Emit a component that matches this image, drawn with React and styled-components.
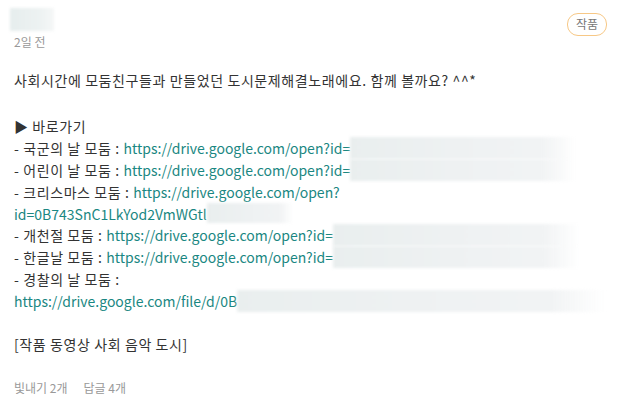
import styled, { createGlobalStyle } from "styled-components"

const Global = createGlobalStyle`
  body {
    margin: 0;
    background: #fff;
    font-family: "Noto Sans CJK KR", "Noto Sans", sans-serif;
  }
`

const Card = styled.div`
  padding: 8px 14px 0 14px;
  color: #333;
`
const Header = styled.div`
  display: flex;
  justify-content: space-between;
  align-items: flex-start;
`
const Author = styled.div`
  display: flex;
  flex-direction: column;
`
const Blur = styled.span`
  display: inline-block;
  vertical-align: top;
  width: ${p => p.w}px;
  height: ${p => p.h || 20}px;
  background: linear-gradient(90deg, #e9eeee 0%, #eef1f2 50%, #f1f3f4 85%, rgba(255,255,255,0) 100%);
  filter: blur(1.5px);
`
const NameBlur = styled(Blur)`
  margin-left: -4px;
  height: 23px;
  background: linear-gradient(90deg, #e6eded, #edf2f2 70%, #f5f7f7);
`
const Time = styled.span`
  font-size: 12px;
  color: #999;
  margin-top: 3px;
  line-height: 16px;
`
const Badge = styled.span`
  margin-top: 5px;
  padding: 0 8px;
  height: 21px;
  line-height: 20px;
  font-size: 12px;
  color: #777;
  border: 1px solid #f7c886;
  border-radius: 11px;
`
const Body = styled.div`
  font-size: 14px;
  line-height: 22px;
  letter-spacing: 0.6px;
`
const Para = styled.p`
  margin: ${p => p.top || 0}px 0 0 0;
`
const Line = styled.div`
  white-space: nowrap;
  height: 21.9px;
`
const Link = styled.span`
  color: #1a8782;
  letter-spacing: 0;
`
const Footer = styled.div`
  margin-top: 25px;
  font-size: 12px;
  line-height: 16px;
  color: #999;
  display: flex;
  gap: 16px;
`

export default function App() {
  return (
    <Card>
      <Global />
      <Header>
        <Author>
          <NameBlur w={44} />
          <Time>2일 전</Time>
        </Author>
        <Badge>작품</Badge>
      </Header>
      <Body>
        <Para top={19}>사회시간에 모둠친구들과 만들었던 도시문제해결노래에요. 함께 볼까요? ^^*</Para>
        <Para top={24}>
          <Line>▶ 바로가기</Line>
          <Line>- 국군의 날 모둠 : <Link>https://drive.google.com/open?id=</Link><Blur w={226} h={22} /></Line>
          <Line>- 어린이 날 모둠 : <Link>https://drive.google.com/open?id=</Link><Blur w={226} h={22} /></Line>
          <Line>- 크리스마스 모둠 : <Link>https://drive.google.com/open?</Link></Line>
          <Line><Link>id=0B743SnC1LkYod2VmWGtl</Link><Blur w={86} h={20} /></Line>
          <Line>- 개천절 모둠 : <Link>https://drive.google.com/open?id=</Link><Blur w={247} h={22} /></Line>
          <Line>- 한글날 모둠 : <Link>https://drive.google.com/open?id=</Link><Blur w={247} h={22} /></Line>
          <Line>- 경찰의 날 모둠 :</Line>
          <Line><Link>https://drive.google.com/file/d/0B</Link><Blur w={368} h={22} /></Line>
        </Para>
        <Para top={21}>[작품 동영상 사회 음악 도시]</Para>
      </Body>
      <Footer>
        <span>빛내기 2개</span>
        <span>답글 4개</span>
      </Footer>
    </Card>
  )
}
